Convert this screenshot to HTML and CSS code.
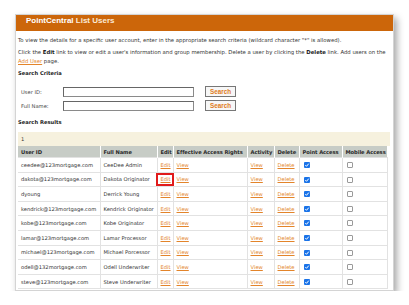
FILE: index.html
```html
<!DOCTYPE html>
<html>
<head>
<meta charset="utf-8">
<link rel="stylesheet" href="styles.css">
</head>
<body>
<div class="panel">
  <div class="header"><span class="brand">PointCentral</span> <span class="title">List Users</span></div>
  <div class="content">
    <p class="intro">To view the details for a specific user account, enter in the appropriate search criteria (wildcard character "*" is allowed).</p>
    <p class="intro">Click the <b>Edit</b> link to view or edit a user's information and group membership. Delete a user by clicking the <b>Delete</b> link. Add users on the <a class="link" href="#">Add&nbsp;User</a> page.</p>
    <h3 class="section">Search Criteria</h3>
    <div class="form">
      <label class="label">User ID:</label><span class="input"></span><span class="btn">Search</span>
      <label class="label">Full Name:</label><span class="input"></span><span class="btn">Search</span>
    </div>
    <h3 class="section results">Search Results</h3>
    <div class="pager">1</div>
    <table class="grid">
      <colgroup>
        <col class="c1"><col class="c2"><col class="c3"><col class="c4"><col class="c5"><col class="c6"><col class="c7"><col class="c8">
      </colgroup>
      <thead>
        <tr><th>User ID</th><th>Full Name</th><th>Edit</th><th>Effective Access Rights</th><th>Activity</th><th>Delete</th><th>Point Access</th><th>Mobile Access</th></tr>
      </thead>
      <tbody>
        <tr><td>ceedee@123mortgage.com</td><td>CeeDee Admin</td><td><a class="link" href="#">Edit</a></td><td><a class="link" href="#">View</a></td><td><a class="link" href="#">View</a></td><td><a class="link" href="#">Delete</a></td><td><span class="cb on"></span></td><td><span class="cb"></span></td></tr>
        <tr><td>dakota@123mortgage.com</td><td>Dakota Originator</td><td class="marked"><a class="link" href="#">Edit</a><span class="redbox"></span></td><td><a class="link" href="#">View</a></td><td><a class="link" href="#">View</a></td><td><a class="link" href="#">Delete</a></td><td><span class="cb on"></span></td><td><span class="cb"></span></td></tr>
        <tr><td>dyoung</td><td>Derrick Young</td><td><a class="link" href="#">Edit</a></td><td><a class="link" href="#">View</a></td><td><a class="link" href="#">View</a></td><td><a class="link" href="#">Delete</a></td><td><span class="cb on"></span></td><td><span class="cb"></span></td></tr>
        <tr><td>kendrick@123mortgage.com</td><td>Kendrick Originator</td><td><a class="link" href="#">Edit</a></td><td><a class="link" href="#">View</a></td><td><a class="link" href="#">View</a></td><td><a class="link" href="#">Delete</a></td><td><span class="cb on"></span></td><td><span class="cb"></span></td></tr>
        <tr><td>kobe@123mortgage.com</td><td>Kobe Originator</td><td><a class="link" href="#">Edit</a></td><td><a class="link" href="#">View</a></td><td><a class="link" href="#">View</a></td><td><a class="link" href="#">Delete</a></td><td><span class="cb on"></span></td><td><span class="cb"></span></td></tr>
        <tr><td>lamar@123mortgage.com</td><td>Lamar Processor</td><td><a class="link" href="#">Edit</a></td><td><a class="link" href="#">View</a></td><td><a class="link" href="#">View</a></td><td><a class="link" href="#">Delete</a></td><td><span class="cb on"></span></td><td><span class="cb"></span></td></tr>
        <tr><td>michael@123mortgage.com</td><td>Michael Porcessor</td><td><a class="link" href="#">Edit</a></td><td><a class="link" href="#">View</a></td><td><a class="link" href="#">View</a></td><td><a class="link" href="#">Delete</a></td><td><span class="cb on"></span></td><td><span class="cb"></span></td></tr>
        <tr><td>odell@132mortgage.com</td><td>Odell Underwriter</td><td><a class="link" href="#">Edit</a></td><td><a class="link" href="#">View</a></td><td><a class="link" href="#">View</a></td><td><a class="link" href="#">Delete</a></td><td><span class="cb on"></span></td><td><span class="cb"></span></td></tr>
        <tr><td>steve@123mortgage.com</td><td>Steve Underwriter</td><td><a class="link" href="#">Edit</a></td><td><a class="link" href="#">View</a></td><td><a class="link" href="#">View</a></td><td><a class="link" href="#">Delete</a></td><td><span class="cb on"></span></td><td><span class="cb"></span></td></tr>
      </tbody>
    </table>
  </div>
</div>
</body>
</html>
```
FILE: styles.css
```css
html, body {
  margin: 0;
  padding: 0;
  background: #ffffff;
}
body {
  font-family: "DejaVu Sans", Verdana, sans-serif;
  font-size: 5.2px;
  color: #333333;
}
.panel {
  margin: 14px 0 0 15px;
  width: 377px;
  height: 275px;
  border: 1px solid #d4d4d4;
  background: #ffffff;
  box-shadow: 3px 4px 7px rgba(0, 0, 0, 0.35);
  overflow: hidden;
}
.header {
  height: 16px;
  background: #cc660a;
  color: #ffffff;
  font-family: "Liberation Sans", Arial, sans-serif;
  font-weight: bold;
  font-size: 8px;
  line-height: 11px;
  padding-left: 10px;
  box-sizing: border-box;
}
.header .title {
  color: #fbe9d6;
}
.content {
  padding: 0 3px 0 2px;
}
.intro {
  margin: 5px 0 0;
  font-size: 5.33px;
  line-height: 9px;
}
.intro + .intro {
  margin-top: 3px;
}
.intro b {
  font-weight: bold;
  color: #222;
}
.link {
  color: #e3842a;
  text-decoration: underline;
}
.section {
  margin: 3px 0 0;
  font-size: 5.2px;
  line-height: 9px;
  font-weight: bold;
  color: #222;
}
.form {
  display: grid;
  grid-template-columns: 42px 131px 42px;
  column-gap: 0;
  row-gap: 3px;
  align-items: center;
  margin: 8px 0 0 3px;
}
.label {
  color: #444;
}
.input {
  height: 10px;
  border: 1px solid #8a8a8a;
  border-top-color: #666;
  border-left-color: #666;
  box-sizing: border-box;
  background: #fff;
}
.btn {
  margin-left: 11px;
  height: 11px;
  border: 1px solid #777;
  box-sizing: border-box;
  background: #f7f7f7;
  color: #e07a1a;
  font-family: "Liberation Sans", Arial, sans-serif;
  font-weight: bold;
  font-size: 6.3px;
  line-height: 9px;
  text-align: center;
}
.results {
  margin-top: 7px;
}
.pager {
  margin-top: 5px;
  height: 14px;
  background: #f6f1de;
  box-sizing: border-box;
  padding-left: 3px;
  line-height: 14px;
}
.grid {
  width: 369px;
  border-collapse: collapse;
  table-layout: fixed;
}
.c1 { width: 82px; }
.c2 { width: 57px; }
.c3 { width: 16px; }
.c4 { width: 74px; }
.c5 { width: 27px; }
.c6 { width: 25px; }
.c7 { width: 43px; }
.c8 { width: 45px; }
.grid th {
  background: #c7ccc6;
  color: #2a2a2a;
  font-weight: bold;
  text-align: left;
  height: 11px;
  padding: 0 0 0 3px;
  border-left: 1px solid #ffffff;
  white-space: nowrap;
  overflow: hidden;
  letter-spacing: -0.08px;
}
.grid th:first-child {
  border-left: none;
}
.grid td {
  height: 13.6px;
  padding: 0 0 0 3px;
  border: 1px solid #e2e2e2;
  white-space: nowrap;
  overflow: hidden;
  color: #333;
}
.grid td:first-child {
  border-left: none;
}
.marked {
  position: relative;
  overflow: visible !important;
}
.redbox {
  position: absolute;
  left: -2px;
  top: 0;
  width: 18px;
  height: 13px;
  border: 2px solid #e11b1b;
  box-sizing: border-box;
}
.cb {
  display: inline-block;
  width: 6px;
  height: 6px;
  border: 1px solid #9a9a9a;
  border-radius: 1px;
  box-sizing: border-box;
  background: #fff;
  vertical-align: middle;
  margin-left: 1px;
}
.cb.on {
  border: none;
  background: #1a73e8 url("data:image/svg+xml;utf8,<svg xmlns='http://www.w3.org/2000/svg' viewBox='0 0 6 6'><path d='M1.3 3.1 L2.5 4.3 L4.8 1.6' fill='none' stroke='white' stroke-width='1'/></svg>") no-repeat center / 6px 6px;
}
```
